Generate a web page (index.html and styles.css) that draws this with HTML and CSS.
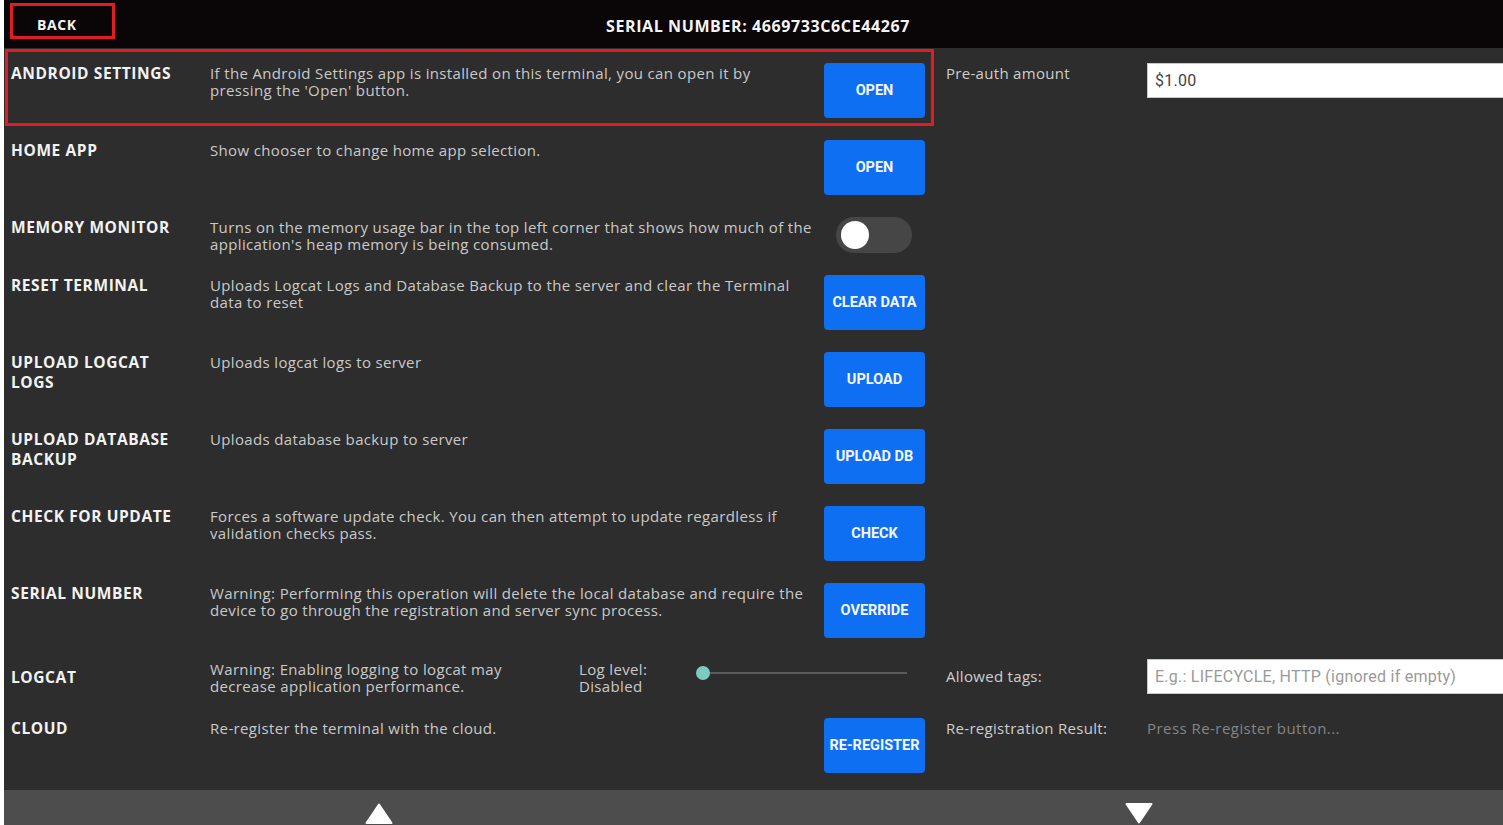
FILE: index.html
```html
<!DOCTYPE html>
<html lang="en">
<head>
    <meta charset="UTF-8">
    <meta name="viewport" content="width=device-width, initial-scale=1.0">
    <title>Terminal Settings</title>
    <link rel="stylesheet" href="styles.css">
</head>
<body>
    <div class="screen">
        <header class="topbar">
            <button class="back">BACK</button>
            <div class="serial">SERIAL NUMBER: 4669733C6CE44267</div>
        </header>

        <main class="settings">
            <div class="row first">
                <div class="setting highlight">
                    <div class="title">ANDROID SETTINGS</div>
                    <div class="desc">If the Android Settings app is installed on this terminal, you can open it by pressing the 'Open' button.</div>
                    <div class="action"><button class="btn">OPEN</button></div>
                </div>
                <div class="extra">
                    <span class="label">Pre-auth amount</span>
                    <input class="field" type="text" value="$1.00">
                </div>
            </div>

            <div class="row">
                <div class="setting">
                    <div class="title">HOME APP</div>
                    <div class="desc">Show chooser to change home app selection.</div>
                    <div class="action"><button class="btn">OPEN</button></div>
                </div>
            </div>

            <div class="row">
                <div class="setting">
                    <div class="title">MEMORY MONITOR</div>
                    <div class="desc">Turns on the memory usage bar in the top left corner that shows how much of the application's heap memory is being consumed.</div>
                    <div class="action"><div class="toggle"><span class="knob"></span></div></div>
                </div>
            </div>

            <div class="row">
                <div class="setting">
                    <div class="title">RESET TERMINAL</div>
                    <div class="desc">Uploads Logcat Logs and Database Backup to the server and clear the Terminal data to reset</div>
                    <div class="action"><button class="btn">CLEAR DATA</button></div>
                </div>
            </div>

            <div class="row">
                <div class="setting">
                    <div class="title">UPLOAD LOGCAT LOGS</div>
                    <div class="desc">Uploads logcat logs to server</div>
                    <div class="action"><button class="btn">UPLOAD</button></div>
                </div>
            </div>

            <div class="row">
                <div class="setting">
                    <div class="title">UPLOAD DATABASE BACKUP</div>
                    <div class="desc">Uploads database backup to server</div>
                    <div class="action"><button class="btn">UPLOAD DB</button></div>
                </div>
            </div>

            <div class="row">
                <div class="setting">
                    <div class="title">CHECK FOR UPDATE</div>
                    <div class="desc">Forces a software update check. You can then attempt to update regardless if validation checks pass.</div>
                    <div class="action"><button class="btn">CHECK</button></div>
                </div>
            </div>

            <div class="row">
                <div class="setting">
                    <div class="title">SERIAL NUMBER</div>
                    <div class="desc">Warning: Performing this operation will delete the local database and require the device to go through the registration and server sync process.</div>
                    <div class="action"><button class="btn">OVERRIDE</button></div>
                </div>
            </div>

            <div class="row logcat">
                <div class="setting">
                    <div class="title">LOGCAT</div>
                    <div class="log-controls">
                        <div class="desc">Warning: Enabling logging to logcat may decrease application performance.</div>
                        <div class="log-level">Log level:<br>Disabled</div>
                        <div class="slider"><span class="thumb"></span></div>
                    </div>
                </div>
                <div class="extra">
                    <span class="label">Allowed tags:</span>
                    <input class="field" type="text" placeholder="E.g.: LIFECYCLE, HTTP (ignored if empty)">
                </div>
            </div>

            <div class="row last">
                <div class="setting">
                    <div class="title">CLOUD</div>
                    <div class="desc">Re-register the terminal with the cloud.</div>
                    <div class="action"><button class="btn">RE-REGISTER</button></div>
                </div>
                <div class="extra">
                    <span class="label">Re-registration Result:</span>
                    <span class="result">Press Re-register button...</span>
                </div>
            </div>
        </main>

        <footer class="pager">
            <div class="page-btn">
                <svg width="28" height="21" viewBox="0 0 28 21"><path d="M14 1.5 L26.5 20 L1.5 20 Z" fill="#fff" stroke="#fff" stroke-width="2" stroke-linejoin="round"/></svg>
            </div>
            <div class="page-btn">
                <svg width="28" height="21" viewBox="0 0 28 21"><path d="M1.5 1 L26.5 1 L14 19.5 Z" fill="#fff" stroke="#fff" stroke-width="2" stroke-linejoin="round"/></svg>
            </div>
        </footer>
    </div>
</body>
</html>
```

FILE: styles.css
```css
html, body {
    margin: 0;
    height: 100%;
    overflow: hidden;
}

body {
    background: #ffffff;
    font-family: "Open Sans", "Liberation Sans", sans-serif;
}

.screen {
    margin-left: 4px;
    width: 1519px;
    height: 825px;
    background: #2d2d2d;
    display: flex;
    flex-direction: column;
}

/* Top bar */
.topbar {
    height: 48px;
    box-sizing: border-box;
    background: #0a0506;
    display: grid;
    grid-template-columns: 1fr auto 1fr;
    align-items: start;
    padding: 3px 17px 0 6px;
}

.back {
    width: 105px;
    height: 36px;
    background: transparent;
    border: 3px solid #e31b23;
    color: #f2f2f2;
    font-family: "Open Sans", sans-serif;
    font-weight: 700;
    font-size: 14px;
    letter-spacing: 0.6px;
    text-align: left;
    padding: 7px 0 0 24px;
    justify-self: start;
}

.serial {
    align-self: center;
    color: #f4f4f4;
    font-weight: 700;
    font-size: 16px;
    letter-spacing: 0.6px;
}

/* Settings rows */
.settings {
    flex: 1;
}

.row {
    display: flex;
}

.setting {
    width: 931px;
    flex-shrink: 0;
    box-sizing: border-box;
    display: grid;
    grid-template-columns: 199px 1fr 101px;
    padding: 13px 10px 9px 7px;
}

.row.first .setting,
.row.first .extra {
    padding-top: 15px;
}

.highlight {
    outline: 3px solid #e31b23;
    outline-offset: -4px;
}

.title {
    color: #f2f2f2;
    font-weight: 700;
    font-size: 15.5px;
    letter-spacing: 0.6px;
    line-height: 20px;
    padding-right: 19px;
}

.desc {
    color: #c9c9c9;
    font-size: 15px;
    letter-spacing: 0.35px;
    line-height: 17px;
    padding: 2px 11px 0 0;
}

.action {
    display: flex;
    justify-content: center;
}

.btn {
    width: 101px;
    height: 55px;
    flex-shrink: 0;
    border: none;
    border-radius: 4px;
    background: #0e6ff3;
    color: #f4f6fb;
    font-family: Roboto, "Liberation Sans", sans-serif;
    font-weight: 700;
    font-size: 14.5px;
    padding: 0;
}

.toggle {
    width: 76px;
    height: 36px;
    border-radius: 18px;
    background: #464646;
    position: relative;
    margin-left: -2px;
}

.knob {
    position: absolute;
    left: 5px;
    top: 4px;
    width: 28px;
    height: 28px;
    border-radius: 50%;
    background: #ffffff;
}

/* Logcat row */
.logcat .setting {
    align-items: center;
    height: 58px;
    padding-top: 11px;
    padding-bottom: 11px;
}

.log-controls {
    grid-column: 2 / 4;
    display: flex;
    align-items: center;
}

.log-controls .desc {
    width: 340px;
    margin-right: 29px;
    padding: 3px 0 0 0;
}

.log-level {
    width: 117px;
    padding-top: 3px;
    color: #c9c9c9;
    font-size: 15px;
    letter-spacing: 0.35px;
    line-height: 17px;
}

.slider {
    position: relative;
    width: 204px;
    height: 2px;
    margin-left: 7px;
    margin-top: -7px;
    background: #5a5a5a;
}

.thumb {
    position: absolute;
    left: -7px;
    top: -6px;
    width: 14px;
    height: 14px;
    border-radius: 50%;
    background: #7dcbbf;
}

.last .setting {
    padding-bottom: 17px;
}

/* Right column */
.extra {
    flex: 1;
    display: flex;
    align-items: flex-start;
    padding: 13px 0 0 11px;
}

.logcat .extra {
    align-items: center;
    padding-top: 0;
}

.label {
    width: 201px;
    flex-shrink: 0;
    color: #cdcdcd;
    font-size: 15px;
    letter-spacing: 0.3px;
    line-height: 17px;
    padding-top: 2px;
}

.logcat .label {
    padding-top: 0;
}

.field {
    width: 380px;
    height: 35px;
    flex-shrink: 0;
    box-sizing: border-box;
    border: 1px solid #c9c9c9;
    background: #ffffff;
    padding: 0 7px;
    font-family: Roboto, "Liberation Sans", sans-serif;
    font-size: 16px;
    letter-spacing: 0.25px;
    color: #444444;
    outline: none;
}

.field::placeholder {
    color: #9a9a9a;
}

.result {
    color: #858585;
    font-size: 15px;
    letter-spacing: 0.45px;
    line-height: 17px;
    padding-top: 2px;
}

/* Pager */
.pager {
    height: 35px;
    background: #4d4d4d;
    display: grid;
    grid-template-columns: 750px 1fr;
}

.page-btn {
    display: flex;
    justify-content: center;
    padding-top: 13px;
}
```
